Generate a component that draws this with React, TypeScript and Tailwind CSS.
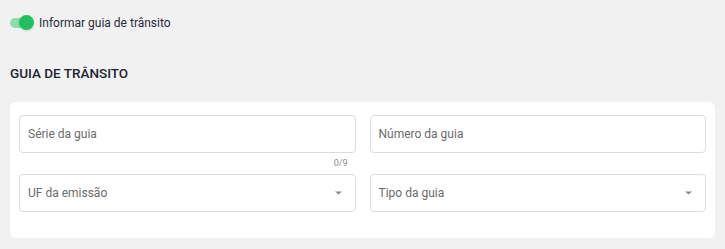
import React from "react";

const Field = ({ label, select }: { label: string; select?: boolean }) => (
  <div className="flex h-[38px] items-center justify-between rounded border border-[#dcdcdc] bg-white pl-[8px] pr-[13px]">
    <span className="text-[12px] text-[#6b6b6b]">{label}</span>
    {select && (
      <svg width="7" height="4" viewBox="0 0 7 4">
        <path d="M0 0.5h7L3.5 3.5z" fill="#8a8a8a" />
      </svg>
    )}
  </div>
);

export default function App() {
  const [on, setOn] = React.useState(true);

  return (
    <div
      className="h-[249px] w-[725px] bg-[#f1f1f1] px-[10px]"
      style={{ fontFamily: "Roboto, 'Liberation Sans', sans-serif" }}
    >
      <div className="flex h-[44px] items-center gap-[6px] pt-[1px]">
        <button
          className="relative h-[10px] w-[23px] rounded-full bg-[#8fdcab]"
          onClick={() => setOn(!on)}
        >
          <span className="absolute right-[-1px] top-[-3px] h-[15px] w-[15px] rounded-full bg-[#1fc05d] shadow-sm" />
        </button>
        <span className="text-[12px] text-[#2b2b3a]">Informar guia de trânsito</span>
      </div>

      <h2 className="mt-[18px] text-[13.5px] font-medium leading-[22px] text-[#1f2430]">
        GUIA DE TRÂNSITO
      </h2>

      <div className="mt-[18px] rounded-md bg-white px-[9px] pb-[26px] pt-[13px]">
        <div className="grid grid-cols-2 gap-x-[14px]">
          <div>
            <Field label="Série da guia" />
            <div className="flex h-[21px] items-center justify-end pr-[8px] text-[9px] text-[#8a8a8a]">
              0/9
            </div>
          </div>
          <div>
            <Field label="Número da guia" />
          </div>
          <Field label="UF da emissão" select />
          <Field label="Tipo da guia" select />
        </div>
      </div>
    </div>
  );
}
